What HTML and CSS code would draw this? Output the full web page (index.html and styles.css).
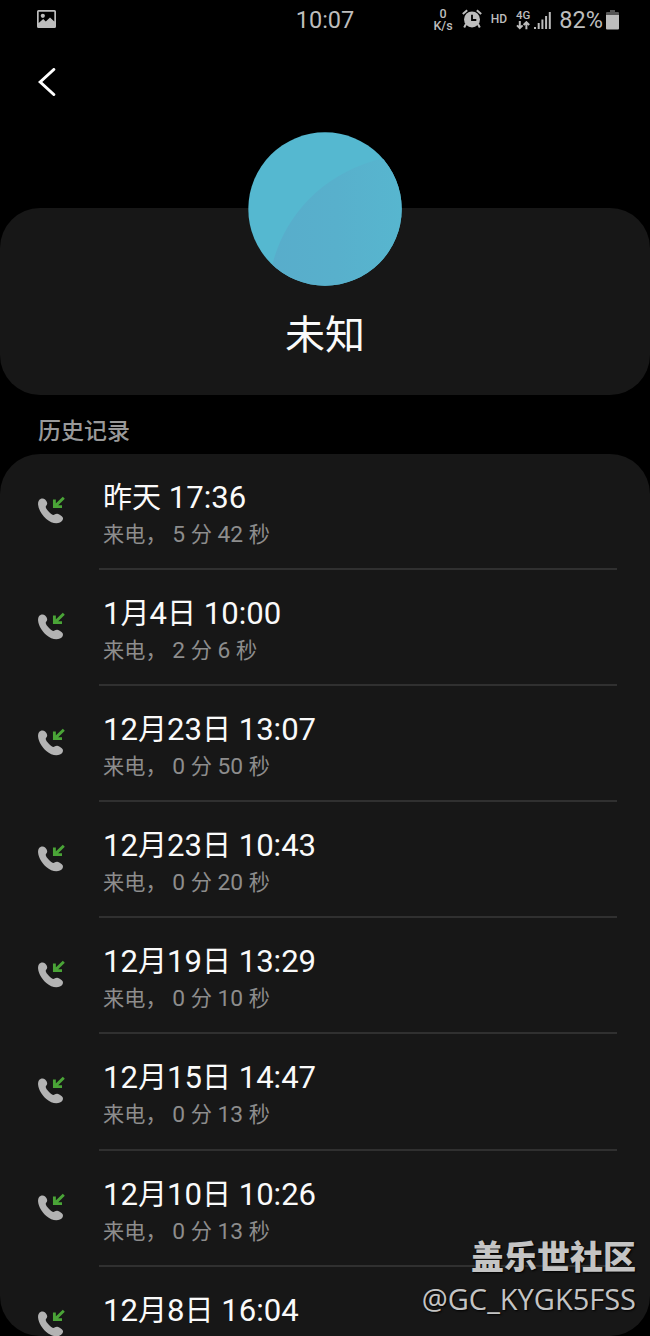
FILE: index.html
```html
<!DOCTYPE html>
<html lang="zh-CN">
<head>
    <meta charset="UTF-8">
    <meta name="viewport" content="width=device-width, initial-scale=1.0">
    <title>历史记录</title>
    <link rel="stylesheet" href="styles.css">
</head>
<body>
    <svg class="sprite" aria-hidden="true">
        <symbol id="incoming" viewBox="0 0 30 30">
            <path d="M2.6 4.6C3.8 3.2 6.6 2.9 8.1 4.4C9.4 5.6 10.3 7.2 10.2 8.8C10 10.3 8.6 10.9 8.7 12C8.9 13.3 10.1 14.9 11.6 16.5C13.2 18.2 14.8 19.7 16.1 19.9C17.5 20 18.6 18.5 20.2 18.7C22.3 19.1 24.9 20.9 25.8 22.5C26.6 24.5 25.1 26.6 22.9 27.6C18.9 29.2 13.6 27.8 9.3 24C4.8 20 1.7 14.7 1.1 9.7C.9 7.7 1.4 6 2.6 4.6Z" fill="#b3b3b3"/>
            <path d="M26.8 2.7L18.4 10.9M17.4 4.6V11.6H25" fill="none" stroke="#4aa437" stroke-width="2.9"/>
        </symbol>
    </svg>

    <header class="status-bar">
        <svg class="picture-icon" viewBox="0 0 19 18">
            <path fill-rule="evenodd" d="M1.5 0H17.5Q19 0 19 1.5V16.5Q19 18 17.5 18H1.5Q0 18 0 16.5V1.5Q0 0 1.5 0ZM1.7 1.7V13L6.2 9L8.8 11.4L13 7.5L17.3 11.5V1.7Z"/>
            <circle cx="5.8" cy="5.8" r="2.1"/>
        </svg>
        <span class="clock">10:07</span>
        <div class="status-icons">
            <div class="speed"><span>0</span><span>K/s</span></div>
            <svg class="alarm-icon" viewBox="0 0 20 20">
                <path d="M4 15L2.2 18.5M16 15L17.8 18.5M.8 5L5.2 1.2M19.2 5L14.8 1.2" fill="none" stroke="#bdbdbd" stroke-width="2"/>
                <circle cx="10" cy="10.4" r="8"/>
                <path d="M10 5.7V11H14.3" fill="none" stroke="#000" stroke-width="1.8"/>
            </svg>
            <span class="hd">HD</span>
            <div class="network">
                <span>4G</span>
                <svg viewBox="0 0 14 9"><path d="M3.8 0V7M1 4.4L3.8 7.2L6.6 4.4M10.4 8.3V1.5M7.6 4L10.4 1.2L13.2 4" fill="none" stroke="#bdbdbd" stroke-width="2"/></svg>
            </div>
            <svg class="signal-icon" viewBox="0 0 17 17"><path d="M0 15H2V17H0ZM3.7 11H5.7V17H3.7ZM7.4 7.5H9.4V17H7.4ZM11.1 4H13.1V17H11.1ZM14.8 0H16.8V17H14.8Z"/></svg>
            <span class="percent">82%</span>
            <svg class="battery-icon" viewBox="0 0 13 20"><path d="M4 0H9V2H12Q13 2 13 3V6H0V3Q0 2 1 2H4Z" fill="#555"/><path d="M0 5H13V18.5Q13 19.5 12 19.5H1Q0 19.5 0 18.5Z"/></svg>
        </div>
    </header>

    <nav class="toolbar">
        <svg class="back-icon" viewBox="0 0 18 28"><path d="M15.8 1.5L2.2 14L15.8 26.5" fill="none" stroke="#fff" stroke-width="3" stroke-linecap="round"/></svg>
    </nav>

    <section class="profile">
        <svg class="avatar" viewBox="0 0 154 154">
            <defs>
                <clipPath id="round"><circle cx="77" cy="77" r="76.7"/></clipPath>
                <linearGradient id="shade">
                    <stop offset="0" stop-color="#58adcb"/>
                    <stop offset=".5" stop-color="#58b0cc"/>
                    <stop offset="1" stop-color="#57b6cf"/>
                </linearGradient>
            </defs>
            <g clip-path="url(#round)">
                <rect width="154" height="154" fill="#55b8d0"/>
                <path d="M24 134C34 92 66 46 128 28L154 24V154H24Z" fill="url(#shade)"/>
            </g>
        </svg>
        <h1>未知</h1>
    </section>

    <h2>历史记录</h2>

    <ul class="history">
        <li>
            <svg class="call-icon"><use href="#incoming"/></svg>
            <div class="call">
                <p class="time"><span>昨天</span> 17:36</p>
                <p class="detail"><span>来电，</span> 5 <span>分</span> 42 <span>秒</span></p>
            </div>
        </li>
        <li>
            <svg class="call-icon"><use href="#incoming"/></svg>
            <div class="call">
                <p class="time">1<span>月</span>4<span>日</span> 10:00</p>
                <p class="detail"><span>来电，</span> 2 <span>分</span> 6 <span>秒</span></p>
            </div>
        </li>
        <li>
            <svg class="call-icon"><use href="#incoming"/></svg>
            <div class="call">
                <p class="time">12<span>月</span>23<span>日</span> 13:07</p>
                <p class="detail"><span>来电，</span> 0 <span>分</span> 50 <span>秒</span></p>
            </div>
        </li>
        <li>
            <svg class="call-icon"><use href="#incoming"/></svg>
            <div class="call">
                <p class="time">12<span>月</span>23<span>日</span> 10:43</p>
                <p class="detail"><span>来电，</span> 0 <span>分</span> 20 <span>秒</span></p>
            </div>
        </li>
        <li>
            <svg class="call-icon"><use href="#incoming"/></svg>
            <div class="call">
                <p class="time">12<span>月</span>19<span>日</span> 13:29</p>
                <p class="detail"><span>来电，</span> 0 <span>分</span> 10 <span>秒</span></p>
            </div>
        </li>
        <li>
            <svg class="call-icon"><use href="#incoming"/></svg>
            <div class="call">
                <p class="time">12<span>月</span>15<span>日</span> 14:47</p>
                <p class="detail"><span>来电，</span> 0 <span>分</span> 13 <span>秒</span></p>
            </div>
        </li>
        <li>
            <svg class="call-icon"><use href="#incoming"/></svg>
            <div class="call">
                <p class="time">12<span>月</span>10<span>日</span> 10:26</p>
                <p class="detail"><span>来电，</span> 0 <span>分</span> 13 <span>秒</span></p>
            </div>
        </li>
        <li>
            <svg class="call-icon"><use href="#incoming"/></svg>
            <div class="call">
                <p class="time">12<span>月</span>8<span>日</span> 16:04</p>
            </div>
        </li>
    </ul>

    <div class="watermark">
        <strong>盖乐世社区</strong>
        <span>@GC_KYGK5FSS</span>
    </div>
</body>
</html>
```
FILE: styles.css
```css
* {
    box-sizing: border-box;
    margin: 0;
    padding: 0;
}

body {
    position: relative;
    display: flex;
    flex-direction: column;
    width: 650px;
    height: 1336px;
    overflow: hidden;
    background-color: #000;
    color: #fafafa;
    font-family: Roboto, 'Noto Sans CJK SC', sans-serif;
}

svg {
    display: block;
    flex-shrink: 0;
    fill: #bdbdbd;
}

.sprite {
    position: absolute;
    width: 0;
    height: 0;
}

.status-bar {
    display: grid;
    grid-template-columns: 1fr auto 1fr;
    align-items: center;
    height: 40px;
    padding: 0 31px 0 37px;
    color: #bdbdbd;
}

.picture-icon {
    width: 19px;
    height: 18px;
    margin-bottom: 2px;
}

.clock {
    font-size: 23.5px;
    margin-left: -6px;
}

.status-icons {
    display: flex;
    align-items: center;
    justify-content: flex-end;
}

.speed {
    display: flex;
    flex-direction: column;
    align-items: center;
    font-size: 12.5px;
    font-weight: 500;
    line-height: 12px;
}

.speed span {
    height: 12px;
}

.alarm-icon {
    width: 20px;
    height: 20px;
    margin: 0 9px 2px 9px;
}

.hd {
    font-size: 12px;
    font-weight: 500;
    margin-bottom: 2px;
}

.network {
    margin: 0 4px 1px 9px;
    font-size: 11.5px;
    font-weight: 500;
    line-height: 10px;
}

.network svg {
    width: 14px;
    height: 9px;
    margin-top: 1px;
}

.signal-icon {
    width: 17px;
    height: 17px;
    margin-right: 8px;
}

.percent {
    font-size: 23.5px;
}

.battery-icon {
    width: 13px;
    height: 20px;
    margin-left: 3px;
}

.toolbar {
    height: 168px;
    padding: 28px 38px;
}

.back-icon {
    width: 18px;
    height: 28px;
}

.profile {
    display: flex;
    flex-direction: column;
    align-items: center;
    height: 187px;
    border-radius: 40px;
    background-color: #171717;
}

.avatar {
    width: 154px;
    height: 154px;
    margin: -76px 1px 0 0;
}

h1 {
    margin-top: 20px;
    font-size: 40px;
    font-weight: 400;
    line-height: 60px;
}

h2 {
    height: 59px;
    padding: 20px 38px 0;
    color: #999;
    font-size: 23px;
    font-weight: 500;
    line-height: 34px;
}

.history {
    height: 882px;
    border-radius: 40px;
    background-color: #171717;
    list-style: none;
    overflow: hidden;
}

.history li {
    display: flex;
    height: 116.1px;
    padding: 0 33px 0 37px;
}

.call-icon {
    width: 30px;
    height: 30px;
    margin: 41px 32px 0 0;
}

.call {
    flex: 1;
    padding: 24px 4px 0;
    border-bottom: 2px solid #303030;
    white-space: nowrap;
}

.time {
    height: 40px;
    font-size: 31.1px;
    line-height: 40px;
}

.time span {
    font-size: 29px;
}

.detail {
    height: 34px;
    color: #8d8d8d;
    font-size: 22.8px;
    line-height: 34px;
}

.detail span {
    font-size: 21.2px;
}

.watermark {
    position: absolute;
    right: 14px;
    bottom: 15px;
    display: flex;
    flex-direction: column;
    align-items: flex-end;
    color: #c4c4c4;
    font-family: 'Open Sans', 'Noto Sans CJK SC', sans-serif;
    text-shadow: 1px 1px 2px #000;
}

.watermark strong {
    font-size: 33px;
    font-weight: 900;
    line-height: 41px;
}

.watermark span {
    font-size: 29px;
    line-height: 44px;
}
```
